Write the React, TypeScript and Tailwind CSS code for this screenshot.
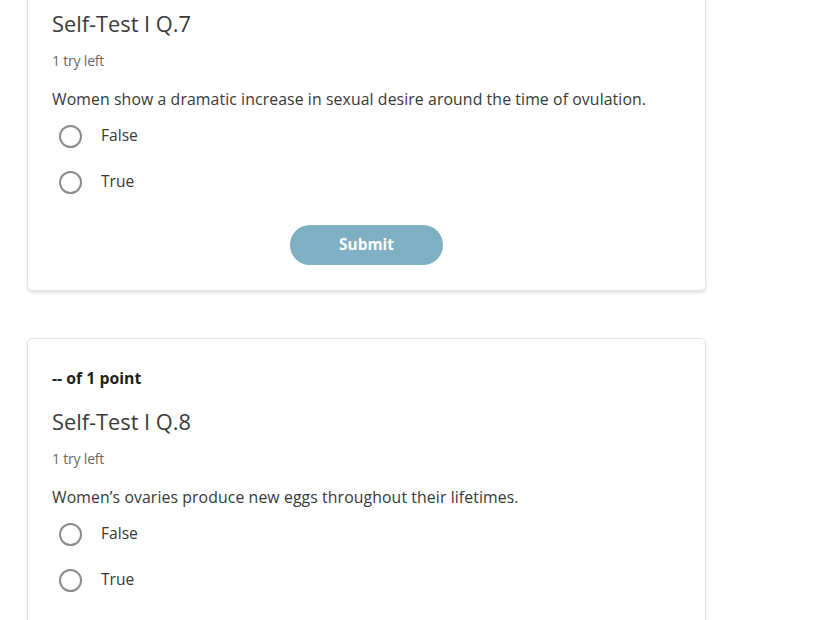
import React, { useState } from 'react';

interface Question {
  id: number;
  prompt: string;
  showPoints: boolean;
  showSubmit: boolean;
}

// Q.7 is scrolled partly above the top edge, Q.8 runs past the bottom edge.
const questions: Question[] = [
  { id: 7, prompt: 'Women show a dramatic increase in sexual desire around the time of ovulation.', showPoints: false, showSubmit: true },
  { id: 8, prompt: 'Women\u2019s ovaries produce new eggs throughout their lifetimes.', showPoints: true, showSubmit: false },
];

function QuestionCard({ q }: { q: Question }) {
  const [choice, setChoice] = useState<string | null>(null);

  return (
    <div className="bg-white rounded-[5px] border border-[#e3e3e3] shadow-[0_2px_3px_rgba(0,0,0,0.12)] px-[24px] pt-[29px] pb-[25px]">
      {q.showPoints && (
        <div className="mb-[20px] text-[15.8px] leading-[20px] font-bold text-[#1f1f1f]">-- of 1 point</div>
      )}
      <h2 className="text-[21.8px] leading-[28px] text-[#3a3a3a]">Self-Test I Q.{q.id}</h2>
      <div className="mt-[15px] text-[14px] leading-[16px] text-[#6a6a6a] tracking-[-0.2px]">1 try left</div>
      <p className="mt-[20px] text-[15.8px] leading-[20px] tracking-[0.1px] text-[#383838]">{q.prompt}</p>
      <div className="mt-[4px] flex flex-col">
        {['False', 'True'].map(opt => (
          <label key={opt} className="h-[46px] flex items-center pl-[7px] cursor-pointer">
            <input
              type="radio"
              name={`q${q.id}`}
              checked={choice === opt}
              onChange={() => setChoice(opt)}
              className="sr-only"
            />
            <span className="w-[23px] h-[23px] rounded-full border-2 border-[#8c8c8c] flex items-center justify-center">
              {choice === opt && <span className="w-[11px] h-[11px] rounded-full bg-[#555]" />}
            </span>
            <span className="ml-[19px] text-[15.6px] text-[#383838]">{opt}</span>
          </label>
        ))}
      </div>
      {q.showSubmit && (
        <div className="mt-[20px] flex justify-center">
          <button className="w-[153px] h-[40px] rounded-full bg-[#7fafc2] text-white text-[15.4px] font-bold">
            Submit
          </button>
        </div>
      )}
    </div>
  );
}

export default function App() {
  return (
    <div className="w-[814px] h-[620px] overflow-hidden bg-white" style={{ fontFamily: '"Open Sans", "Liberation Sans", sans-serif' }}>
      <div className="ml-[27px] w-[679px] -mt-[20px] flex flex-col gap-[47px]">
        {questions.map(q => (
          <QuestionCard key={q.id} q={q} />
        ))}
      </div>
    </div>
  );
}
